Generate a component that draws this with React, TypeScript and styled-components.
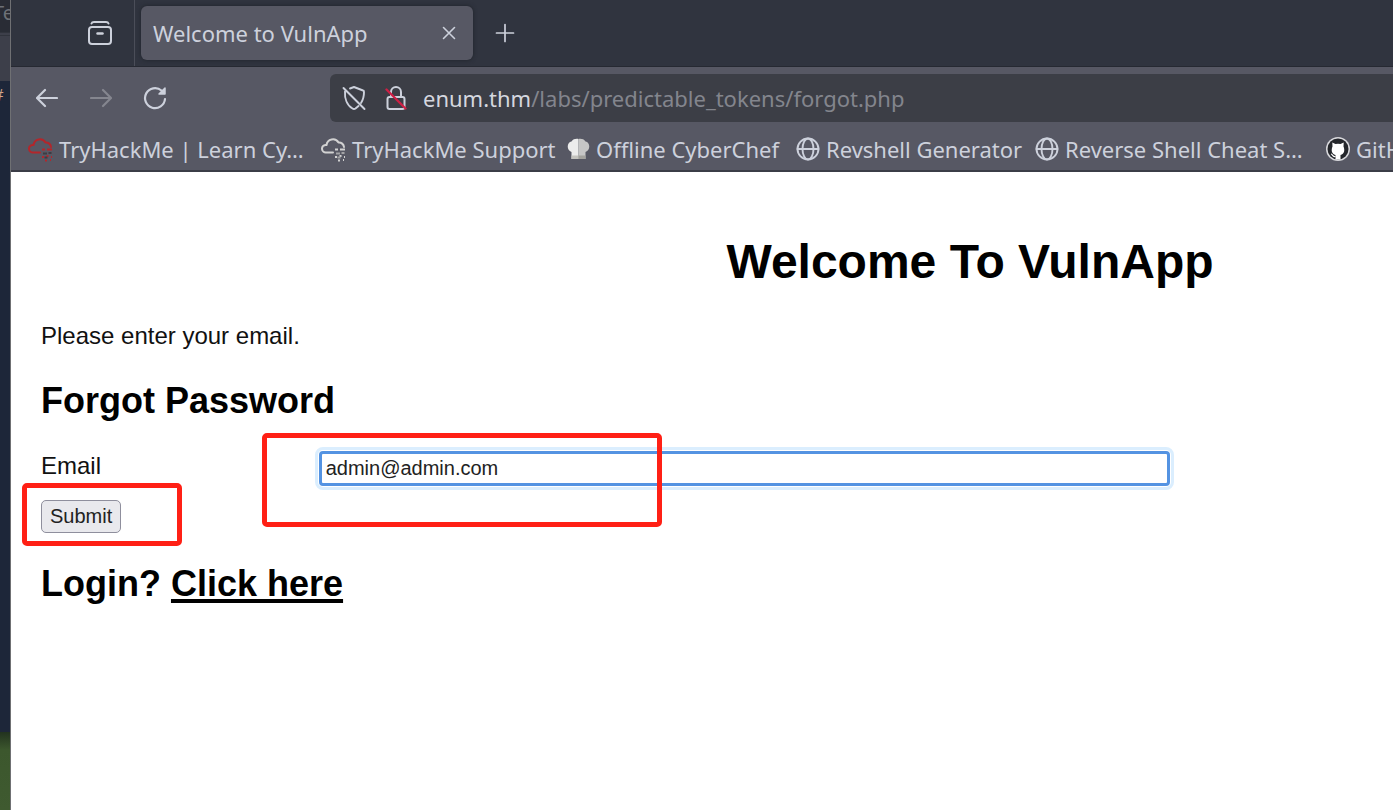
import React from "react";
import styled, { createGlobalStyle } from "styled-components";

const GlobalStyle = createGlobalStyle`
  *, *::before, *::after { box-sizing: border-box; }
  body { margin: 0; background: #ffffff; overflow: hidden; }
  button, input { font-family: "Liberation Sans", Arial, sans-serif; }
`;

const Desktop = styled.div`
  display: flex;
  min-height: 100vh;
  overflow: hidden;
`;

/* The sliver of terminal and wallpaper left of the browser window */
const Backdrop = styled.div`
  display: flex;
  flex-direction: column;
  flex: 0 0 11px;
  overflow: hidden;
  font-family: "Noto Sans", sans-serif;
  font-size: 20px;
  line-height: 26px;
  white-space: nowrap;
  border-right: 1px solid #6f7073;
`;

const TerminalTitle = styled.div`
  height: 32px;
  background: #292c35;
  color: #6d7178;
  text-indent: -7px;
`;

const TerminalMenu = styled.div`
  height: 49px;
  border-top: 4px double #30333c;
  background: #3d3f4a;
`;

const TerminalBody = styled.div`
  height: 651px;
  background: #1d2639;
  color: #d3a489;
  font-family: "Liberation Mono", monospace;
  font-size: 18px;
  line-height: 30px;
  text-indent: -7px;
`;

const Wallpaper = styled.div`
  flex: 1;
  background: linear-gradient(#22321f, #3c572d 18px, #3f5a30);
`;

const BrowserWindow = styled.div`
  display: flex;
  flex-direction: column;
  flex: 1;
  min-width: 0;
  background: #ffffff;
`;

const Chrome = styled.header`
  font-family: "Noto Sans", "Open Sans", sans-serif;
  font-size: 22px;
  line-height: 28px;
  color: #cdd1dc;
  background: #575864;
  border-bottom: 2px solid #3b3d47;
  white-space: nowrap;
  overflow: hidden;
`;

const TabBar = styled.div`
  display: flex;
  align-items: center;
  height: 67px;
  background: #30343f;
  border-bottom: 1px solid #262932;
`;

const IconButton = styled.button<{ $size?: number; $dim?: boolean }>`
  display: grid;
  place-items: center;
  flex: none;
  width: ${(p) => p.$size ?? 54}px;
  height: ${(p) => p.$size ?? 54}px;
  padding: 0;
  border: 0;
  background: transparent;
  color: ${(p) => (p.$dim ? "#85868f" : "#cdd1dc")};
`;

const TabManager = styled.div`
  display: flex;
  align-items: center;
  justify-content: flex-end;
  width: 124px;
  height: 66px;
  padding-right: 7px;
  margin-right: 6px;
  border-right: 1px solid #4b4e59;
`;

const Tab = styled.div`
  display: flex;
  align-items: center;
  justify-content: space-between;
  width: 332px;
  height: 54px;
  padding: 0 8px 0 12px;
  border-radius: 6px;
  background: #575864;
  box-shadow: 0 0 4px #1f222a;
  margin-right: 5px;
`;

const NavBar = styled.nav`
  display: flex;
  align-items: center;
  height: 61px;
  padding-left: 9px;
`;

const UrlBar = styled.div`
  display: flex;
  align-items: center;
  flex: 1;
  height: 48px;
  margin-left: 148px;
  padding-left: 3px;
  border-radius: 6px 0 0 6px;
  background: #3c3e46;
`;

const Address = styled.p`
  margin: 0 0 0 6px;
  color: #83858d;
`;

const Host = styled.span`
  color: #d5d7df;
`;

const Bookmarks = styled.div`
  display: flex;
  height: 42px;
  padding: 0 0 0 17px;
`;

const Bookmark = styled.a<{ $width: number }>`
  display: flex;
  align-items: center;
  gap: 6px;
  flex: 0 0 ${(p) => p.$width}px;
  height: 42px;
  color: inherit;
  text-decoration: none;
`;

const Viewport = styled.div`
  flex: 1;
  overflow: hidden;
`;

/* The page is wider than the visible part of the window */
const Page = styled.main`
  width: calc(100% + 536px);
  padding: 62px 30px;
  font-family: "Liberation Sans", Arial, sans-serif;
  font-size: 24px;
  line-height: 28px;
  color: #111111;
`;

const Title = styled.h1`
  margin: 0 0 32px;
  font-size: 48px;
  line-height: 56px;
  text-align: center;
  color: #000000;
`;

const Intro = styled.p`
  margin: 0 0 30px;
`;

const Subtitle = styled.h2`
  margin: 0 0 29px;
  font-size: 36px;
  line-height: 42px;
  color: #000000;
`;

const Form = styled.form`
  position: relative;
  margin: 0 0 30px;
`;

const Field = styled.div`
  display: flex;
  align-items: flex-start;
  margin-bottom: 14px;
`;

const Label = styled.label`
  flex: 0 0 calc(15% - 1px);
  line-height: 30px;
`;

const EmailInput = styled.input`
  flex: 0 0 calc(46% - 3px);
  height: 35px;
  min-width: 0;
  padding: 0 4px;
  border: 3px solid #5493e2;
  border-radius: 4px;
  outline: 3px solid #dbeefe;
  outline-offset: 1px;
  background: #ffffff;
  color: #222222;
  font-size: 20px;
`;

const Submit = styled.button`
  display: block;
  height: 33px;
  padding: 0 8px;
  border: 1px solid #8f8f9d;
  border-radius: 5px;
  background: #e9e9ed;
  color: #222222;
  font-size: 20px;
`;

const LoginLink = styled.a`
  color: inherit;
  text-decoration-thickness: 4px;
  text-underline-offset: 3px;
  text-decoration-skip-ink: none;
`;

const Marker = styled.div<{ $x: number; $y: number; $w: number; $h: number }>`
  position: absolute;
  left: ${(p) => p.$x}px;
  top: ${(p) => p.$y}px;
  width: ${(p) => p.$w}px;
  height: ${(p) => p.$h}px;
  border: 5px solid #ff2015;
  border-radius: 5px;
  pointer-events: none;
`;

const line = {
  fill: "none",
  stroke: "currentColor",
  strokeLinecap: "round" as const,
  strokeLinejoin: "round" as const,
};

const TabsIcon = () => (
  <svg width="26" height="26" viewBox="0 0 26 26" {...line} strokeWidth="2">
    <path d="M4.500 3.500Q5 2 7 2H19Q21 2 21.500 3.500" />
    <rect x="2" y="7" width="22" height="17" rx="3" />
    <path d="M10.500 13.500h5" strokeWidth="2.500" />
  </svg>
);

const CloseIcon = () => (
  <svg width="14" height="14" viewBox="0 0 14 14" {...line} strokeWidth="1.600">
    <path d="M1.500 1.500l11 11M12.500 1.500l-11 11" />
  </svg>
);

const PlusIcon = () => (
  <svg width="20" height="20" viewBox="0 0 20 20" {...line} strokeWidth="1.700">
    <path d="M10 1.500v17M1.500 10h17" />
  </svg>
);

const ArrowIcon = ({ flip }: { flip?: boolean }) => (
  <svg width="22" height="20" viewBox="0 0 22 20" {...line} strokeWidth="2.200">
    <path d={flip ? "M1 10h20M13 2l8 8-8 8" : "M21 10H1M9 2l-8 8 8 8"} />
  </svg>
);

const ReloadIcon = () => (
  <svg width="24" height="24" viewBox="0 0 24 24" {...line} strokeWidth="2.200">
    <path d="M22 13A10 10 0 1 1 18.500 4.500" />
    <path d="M22 2v6h-6z" fill="currentColor" strokeWidth="1.500" />
  </svg>
);

const ShieldOffIcon = () => (
  <svg width="24" height="26" viewBox="0 0 24 26" {...line} strokeWidth="1.900">
    <path d="M8 3.500L12 2l9 3.500q1 0 1 1.500c0 5-1 8-3 11" />
    <path d="M3 6.500c-.5 7 2 14 7.500 17q1.500 1 3 0l3-2.500" />
    <path d="M1.500 3l21 21" />
  </svg>
);

const LockOffIcon = () => (
  <svg width="22" height="26" viewBox="0 0 22 26" {...line} strokeWidth="2">
    <rect x="2.500" y="12" width="17" height="12" rx="2" />
    <path d="M6 12V7a5 5 0 0 1 10 0v5" />
    <path d="M1.500 4.500l19 19" stroke="#cf1f45" strokeWidth="2.300" />
  </svg>
);

const CloudIcon = ({ color, rain }: { color: string; rain: string }) => (
  <svg width="25" height="25" viewBox="0 0 25 25" {...line} stroke={color} strokeWidth="2">
    <path d="M12 15.500H5a3.700 3.700 0 0 1-.5-7.500h1A6.500 6.500 0 0 1 17.500 5.500 5 5 0 0 1 23 10" />
    <path
      d="M14 12.500h3M19 12.500h5M14 20h2M18.500 19h2M23 20h1M17 23.500h2M22 23h1"
      strokeLinecap="butt"
    />
    <path d="M15 16.500h4M20.500 16h3M16.500 20.500h3" stroke={rain} strokeLinecap="butt" />
  </svg>
);

const ChefIcon = () => (
  <svg width="23" height="23" viewBox="0 0 23 23">
    <path
      d="M4.500 21V14C-1 12 0 4 4.500 3.500 6 1 9 .5 11.500 1V21z"
      fill="#ececec"
    />
    <path
      d="M11.500 1C14 .5 17 1 18.500 3.500 23 4 24 12 18.500 14v7h-7z"
      fill="#c6c6c6"
    />
    <path d="M4.500 17.500h7V21h-7z" fill="#c4c3be" />
    <path d="M11.500 17.500h7V21h-7z" fill="#a3a29d" />
  </svg>
);

const GlobeIcon = () => (
  <svg width="24" height="24" viewBox="0 0 24 24" {...line} strokeWidth="1.900">
    <circle cx="12" cy="12" r="10.500" />
    <ellipse cx="12" cy="12" rx="5.500" ry="10.500" />
    <path d="M1.500 12h21" />
  </svg>
);

const GitHubIcon = () => (
  <svg width="24" height="24" viewBox="0 0 24 24">
    <circle cx="12" cy="12" r="12" fill="#d8d8dc" />
    <circle cx="12" cy="12" r="10.500" fill="#24262b" />
    <path
      d="M9.500 22v-4C5.500 17 5 13 6.500 9.500L6.300 5.500 9.500 7q2.500-.6 5 0l3.200-1.500-.2 4C19 13 18.500 17 14.500 18v4.500h-5z"
      fill="#ffffff"
    />
    <path d="M9.500 19.500c-3 .5-2.500-2-4.500-2.500" fill="none" stroke="#ffffff" strokeWidth="1.200" />
  </svg>
);

const bookmarks = [
  { label: "TryHackMe | Learn Cy…", width: 293, icon: <CloudIcon color="#b3262b" rain="#3e3b43" /> },
  { label: "TryHackMe Support", width: 246, icon: <CloudIcon color="#d2d2d2" rain="#a3a3a6" /> },
  { label: "Offline CyberChef", width: 229, icon: <ChefIcon /> },
  { label: "Revshell Generator", width: 239, icon: <GlobeIcon /> },
  { label: "Reverse Shell Cheat S…", width: 291, icon: <GlobeIcon /> },
  { label: "GitHub", width: 120, icon: <GitHubIcon /> },
];

export default function App() {
  return (
    <Desktop>
      <GlobalStyle />
      <Backdrop aria-hidden="true">
        <TerminalTitle>Te</TerminalTitle>
        <TerminalMenu />
        <TerminalBody>#</TerminalBody>
        <Wallpaper />
      </Backdrop>
      <BrowserWindow>
        <Chrome>
          <TabBar>
            <TabManager>
              <IconButton aria-label="List all tabs"><TabsIcon /></IconButton>
            </TabManager>
            <Tab>
              <span>Welcome to VulnApp</span>
              <IconButton $size={32} aria-label="Close tab"><CloseIcon /></IconButton>
            </Tab>
            <IconButton aria-label="New tab"><PlusIcon /></IconButton>
          </TabBar>
          <NavBar>
            <IconButton aria-label="Back"><ArrowIcon /></IconButton>
            <IconButton aria-label="Forward" $dim><ArrowIcon flip /></IconButton>
            <IconButton aria-label="Reload"><ReloadIcon /></IconButton>
            <UrlBar>
              <IconButton $size={42} aria-label="Tracking protection"><ShieldOffIcon /></IconButton>
              <IconButton $size={42} aria-label="Connection not secure"><LockOffIcon /></IconButton>
              <Address><Host>enum.thm</Host>/labs/predictable_tokens/forgot.php</Address>
            </UrlBar>
          </NavBar>
          <Bookmarks>
            {bookmarks.map((b) => (
              <Bookmark key={b.label} href="#" $width={b.width}>
                {b.icon}
                <span>{b.label}</span>
              </Bookmark>
            ))}
          </Bookmarks>
        </Chrome>
        <Viewport>
          <Page>
            <Title>Welcome To VulnApp</Title>
            <Intro>Please enter your email.</Intro>
            <Subtitle>Forgot Password</Subtitle>
            <Form onSubmit={(e) => e.preventDefault()}>
              <Field>
                <Label htmlFor="email">Email</Label>
                <EmailInput id="email" type="text" defaultValue="admin@admin.com" />
              </Field>
              <Submit type="submit">Submit</Submit>
              <Marker $x={221} $y={-18} $w={400} $h={94} />
              <Marker $x={-19} $y={32} $w={160} $h={63} />
            </Form>
            <Subtitle>
              Login? <LoginLink href="#">Click here</LoginLink>
            </Subtitle>
          </Page>
        </Viewport>
      </BrowserWindow>
    </Desktop>
  );
}
